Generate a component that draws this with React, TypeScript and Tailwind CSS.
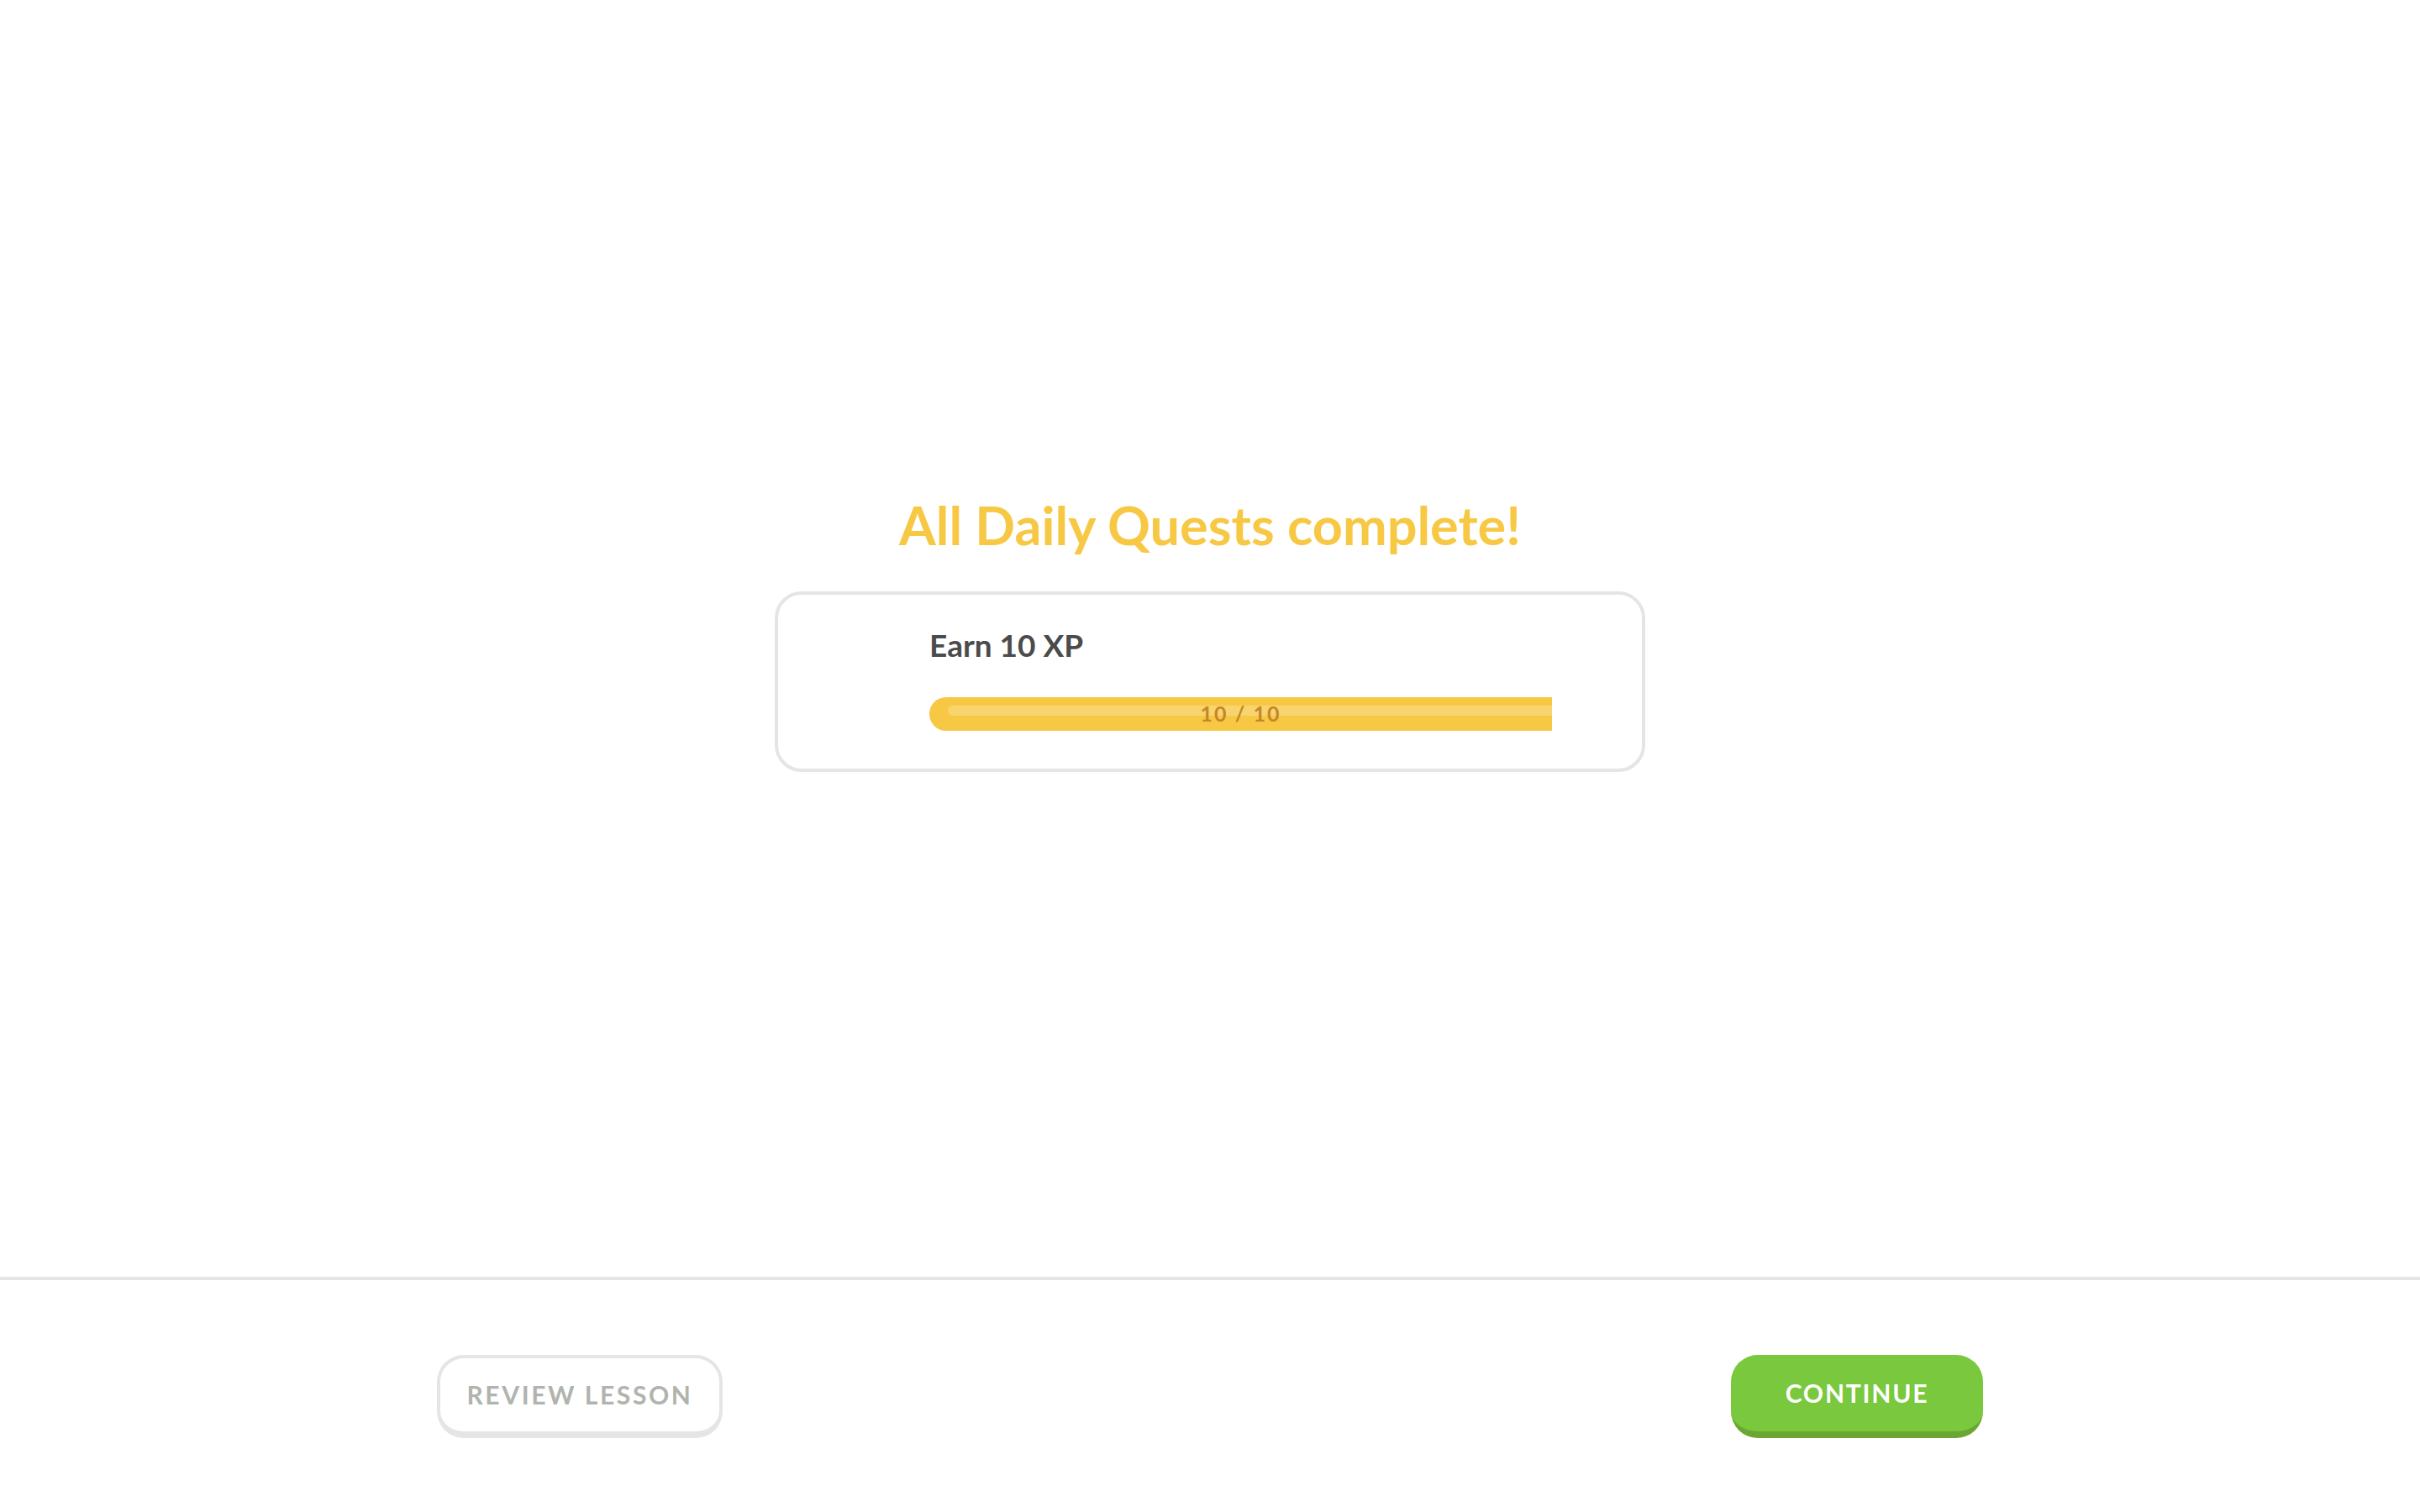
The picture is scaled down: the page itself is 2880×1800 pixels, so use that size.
import React from "react";

export default function App() {
  const font = { fontFamily: "Lato, 'Noto Sans', 'Liberation Sans', sans-serif" };
  return (
    <div className="w-full h-[1800px] bg-white flex flex-col" style={font}>
      <main className="h-[1520px] flex flex-col items-center justify-center pb-[16px]">
        <h1 className="text-[63px] leading-[77px] font-bold text-[#f7c844]">
          All Daily Quests complete!
        </h1>
        <div className="mt-[41px] w-[1036px] h-[215px] border-4 border-[#e5e5e5] rounded-[32px] pl-[180px] pr-[107px] pt-[38px]">
          <div className="text-[37px] leading-[44px] font-bold text-[#4b4b4b]">Earn 10 XP</div>
          <div className="mt-[40px] relative h-[40px] bg-[#f7c844] rounded-l-[20px]">
            <div className="absolute left-[22px] right-0 top-[10px] h-[12px] bg-[#f8d46e] rounded-l-[6px]" />
            <div className="absolute inset-0 flex items-center justify-center text-[25px] leading-none font-bold text-[#c6862a] tracking-[2px]">
              10 / 10
            </div>
          </div>
        </div>
      </main>
      <footer className="flex-1 border-t-4 border-[#e5e5e5] flex items-center">
        <div className="w-[1840px] mx-auto flex justify-between items-center">
          <button className="w-[340px] h-[99px] bg-white border-4 border-b-8 border-[#e5e5e5] rounded-[32px] flex items-center justify-center text-[30px] font-bold tracking-[2.6px] text-[#b0b4ae]">
            REVIEW LESSON
          </button>
          <button className="w-[300px] h-[99px] bg-[#79c83d] border-b-8 border-[#6aa631] rounded-[32px] flex items-center justify-center text-[30px] font-bold tracking-[1.8px] text-white">
            CONTINUE
          </button>
        </div>
      </footer>
    </div>
  );
}
